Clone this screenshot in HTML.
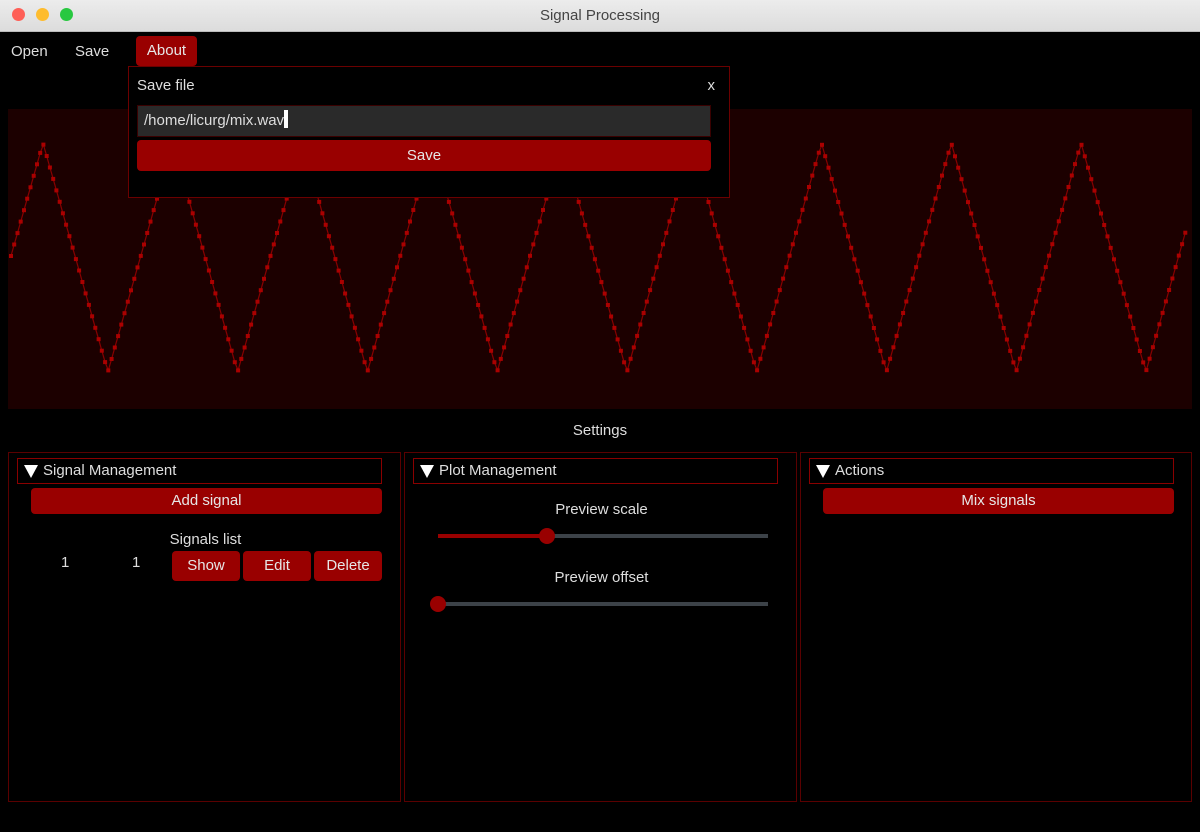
<!DOCTYPE html>
<html><head><meta charset="utf-8"><style>
*{margin:0;padding:0;box-sizing:border-box}
body{width:1200px;height:832px;background:#000;font-family:"Liberation Sans",sans-serif;color:#dedede;position:relative;overflow:hidden;font-size:15px}
.abs{position:absolute}
.title{left:0;top:0;width:1200px;height:32px;background:linear-gradient(#ececec,#dcdcdc);border-bottom:1px solid #bbb;color:#444;text-align:center;line-height:32px;font-size:15px}
.dot{width:13px;height:13px;border-radius:50%;top:8px}
.btn{background:#990000;border-radius:4px;text-align:center;color:#e6e6e6}
.panel{border:1px solid #5a0000;top:452px;height:350px}
.hdr{border:1px solid #8a0000;height:26px;line-height:24px;padding-left:25px}
.tri{position:absolute;left:6px;top:6px;width:0;height:0;border-left:7px solid transparent;border-right:7px solid transparent;border-top:13px solid #fff}
</style></head><body>
<div class="abs title">Signal Processing</div>
<div class="abs dot" style="left:12px;background:#fe5f57"></div>
<div class="abs dot" style="left:36px;background:#febc2e"></div>
<div class="abs dot" style="left:60px;background:#28c840"></div>
<div class="abs" style="left:11px;top:43px">Open</div>
<div class="abs" style="left:75px;top:43px">Save</div>
<div class="abs btn" style="left:136px;top:36px;width:61px;height:30px;line-height:30px">About</div>
<div class="abs" style="left:8px;top:109px;width:1184px;height:300px;background:#1c0000"></div>
<svg class="abs" style="left:0;top:0" width="1200" height="420" id="wv"></svg>
<div class="abs" style="left:128px;top:66px;width:602px;height:132px;background:#000;border:1px solid #6b0000">
 <div class="abs" style="left:8px;top:10px">Save file</div>
 <div class="abs" style="right:14px;top:10px">x</div>
 <div class="abs" style="left:8px;top:38px;width:574px;height:32px;background:#2a2a2a;border:1px solid #3a0000;padding-left:6px;line-height:30px">/home/licurg/mix.wav<span style="display:inline-block;width:4px;height:18px;background:#fff;vertical-align:-3px"></span></div>
 <div class="abs btn" style="left:8px;top:73px;width:574px;height:31px;line-height:31px">Save</div>
</div>
<div class="abs" style="left:0;top:422px;width:1200px;text-align:center">Settings</div>
<div class="abs panel" style="left:8px;width:393px">
 <div class="abs hdr" style="left:8px;top:5px;width:365px"><div class="tri"></div>Signal Management</div>
 <div class="abs btn" style="left:22px;top:35px;width:351px;height:26px;line-height:26px">Add signal</div>
 <div class="abs" style="left:0;top:78px;width:393px;text-align:center">Signals list</div>
 <div class="abs" style="left:52px;top:101px">1</div>
 <div class="abs" style="left:123px;top:101px">1</div>
 <div class="abs btn" style="left:163px;top:98px;width:68px;height:30px;line-height:30px">Show</div>
 <div class="abs btn" style="left:234px;top:98px;width:68px;height:30px;line-height:30px">Edit</div>
 <div class="abs btn" style="left:305px;top:98px;width:68px;height:30px;line-height:30px">Delete</div>
</div>
<div class="abs panel" style="left:404px;width:393px">
 <div class="abs hdr" style="left:8px;top:5px;width:365px"><div class="tri"></div>Plot Management</div>
 <div class="abs" style="left:0;top:48px;width:393px;text-align:center">Preview scale</div>
 <div class="abs" style="left:33px;top:81px;width:330px;height:4px;background:#3c4248"></div>
 <div class="abs" style="left:33px;top:81px;width:110px;height:4px;background:#990000"></div>
 <div class="abs" style="left:134px;top:75px;width:16px;height:16px;border-radius:50%;background:#990000"></div>
 <div class="abs" style="left:0;top:116px;width:393px;text-align:center">Preview offset</div>
 <div class="abs" style="left:30px;top:149px;width:333px;height:4px;background:#3c4248"></div>
 <div class="abs" style="left:25px;top:143px;width:16px;height:16px;border-radius:50%;background:#990000"></div>
</div>
<div class="abs panel" style="left:800px;width:392px">
 <div class="abs hdr" style="left:8px;top:5px;width:365px"><div class="tri"></div>Actions</div>
 <div class="abs btn" style="left:22px;top:35px;width:351px;height:26px;line-height:26px">Mix signals</div>
</div>
<script>
(function(){
var s=document.getElementById('wv'),P=129.75,x0=43,yTop=143,yBot=372,pts=[],r='';
for(var x=11;x<=1187;x+=3.244){var ph=((x-x0)%P+P)%P/P;var t=ph<0.5?ph*2:2-ph*2;var y=yTop+(yBot-yTop)*t;pts.push(x.toFixed(1)+','+y.toFixed(1));r+='<rect x="'+(x-2).toFixed(1)+'" y="'+(y-2).toFixed(1)+'" width="4" height="4" fill="#aa0000"/>';}
s.innerHTML='<polyline points="'+pts.join(' ')+'" fill="none" stroke="#880000" stroke-width="1.2"/>'+r;
})();
</script>
</body></html>
